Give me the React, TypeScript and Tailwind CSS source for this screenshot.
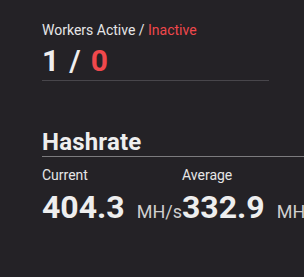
export default function App() {
  return (
    <div className="min-h-[277px] w-[304px] overflow-hidden bg-[#242226] pl-[42px] pt-[20px] font-['Roboto',sans-serif] text-[#eeeeee]">
      <div className="w-[227px] border-b border-[#48464b] pb-[2px]">
        <p className="text-[14px] leading-5 text-[#e6e6e6]">
          Workers Active / <span className="text-[#f0484c]">Inactive</span>
        </p>
        <p className="mt-[3px] text-[30px] font-bold leading-[35px]">
          <span>1</span>
          <span className="mx-[10px] font-semibold">/</span>
          <span className="text-[#f0484c]">0</span>
        </p>
      </div>

      <div className="mt-[47px] w-[300px]">
        <h2 className="border-b border-[#7c7b7e] text-[24px] font-bold leading-7 tracking-[0.2px]">Hashrate</h2>
        <div className="mt-2 grid grid-cols-[140px_140px]">
          <div>
            <p className="text-[14px] leading-5 text-[#e6e6e6]">Current</p>
            <p className="mt-0.5 whitespace-nowrap text-[32px] font-bold leading-10">
              404.3<span className="ml-[12px] text-[18px] font-normal text-[#cfcfcf]">MH/s</span>
            </p>
          </div>
          <div>
            <p className="text-[14px] leading-5 text-[#e6e6e6]">Average</p>
            <p className="mt-0.5 whitespace-nowrap text-[32px] font-bold leading-10">
              332.9<span className="ml-[12px] text-[18px] font-normal text-[#cfcfcf]">MH/s</span>
            </p>
          </div>
        </div>
      </div>
    </div>
  )
}
